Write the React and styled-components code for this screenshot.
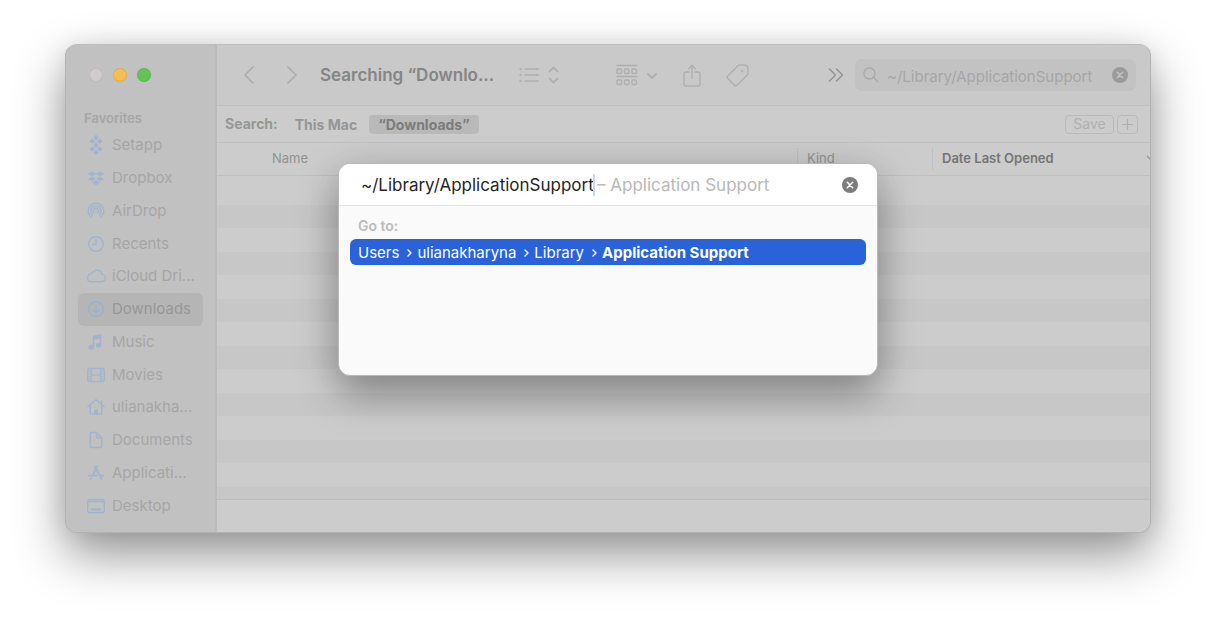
import { useState } from "react"
import styled, { createGlobalStyle } from "styled-components"

const FAVORITES = [
	{ name: "Setapp", icon: "setapp" },
	{ name: "Dropbox", icon: "dropbox" },
	{ name: "AirDrop", icon: "airdrop" },
	{ name: "Recents", icon: "clock" },
	{ name: "iCloud Dri...", icon: "cloud" },
	{ name: "Downloads", icon: "download" },
	{ name: "Music", icon: "music" },
	{ name: "Movies", icon: "film" },
	{ name: "ulianakha...", icon: "home" },
	{ name: "Documents", icon: "doc" },
	{ name: "Applicati...", icon: "apps" },
	{ name: "Desktop", icon: "desktop" },
]

const PATH = ["Users", "ulianakharyna", "Library"]

function App() {
	const [selected, setSelected] = useState("Downloads")
	const [query, setQuery] = useState("~/Library/ApplicationSupport")
	const [folder, setFolder] = useState("~/Library/ApplicationSupport")

	return (
		<Desktop>
			<GlobalStyle />
			<Window>
				<Sidebar>
					<Lights>
						<Light $color="#cfcbce" aria-label="Close" />
						<Light $color="#f5be4f" aria-label="Minimize" />
						<Light $color="#61c455" aria-label="Zoom" />
					</Lights>
					<SidebarTitle>Favorites</SidebarTitle>
					<Places>
						{FAVORITES.map(({ name, icon }) => (
							<Place
								key={name}
								$active={name === selected}
								onClick={() => setSelected(name)}
							>
								<SidebarIcon name={icon} />
								{name}
							</Place>
						))}
					</Places>
				</Sidebar>

				<Main>
					<Toolbar>
						<NavButtons>
							<ToolButton aria-label="Back">
								<Chevron d="M9 1 1 9l8 8" />
							</ToolButton>
							<ToolButton aria-label="Forward">
								<Chevron d="m1 1 8 8-8 8" />
							</ToolButton>
						</NavButtons>
						<Title>Searching “Downlo...</Title>
						<ToolButton aria-label="View as list">
							<ListIcon />
						</ToolButton>
						<ToolGroup>
							<ToolButton aria-label="Group items">
								<GroupIcon />
							</ToolButton>
							<ToolButton aria-label="Share">
								<ShareIcon />
							</ToolButton>
							<ToolButton aria-label="Edit tags">
								<TagIcon />
							</ToolButton>
						</ToolGroup>
						<MoreButton aria-label="More">
							<svg width="16" height="14" viewBox="0 0 16 14" fill="none" stroke="#949494" strokeWidth="1.5" strokeLinecap="round" strokeLinejoin="round">
								<path d="m1.5 1 6 6-6 6M8.500 1l6 6-6 6" />
							</svg>
						</MoreButton>
						<SearchField>
							<svg width="16" height="16" viewBox="0 0 16 16" fill="none" stroke="#a9a9a9" strokeWidth="1.4" strokeLinecap="round">
								<circle cx="6.500" cy="6.500" r="5.500" />
								<path d="m10.600 10.600 4.400 4.400" />
							</svg>
							<SearchInput
								aria-label="Search"
								value={query}
								onChange={(e) => setQuery(e.target.value)}
							/>
							<ClearButton aria-label="Clear search" onClick={() => setQuery("")}>
								<ClearIcon color="#9b9b9b" cross="#c5c5c5" />
							</ClearButton>
						</SearchField>
					</Toolbar>

					<ScopeBar>
						<ScopeLabel>Search:</ScopeLabel>
						<Scope>This Mac</Scope>
						<Scope $active>“Downloads”</Scope>
						<ScopeActions>
							<OutlineButton>Save</OutlineButton>
							<OutlineButton $square aria-label="Add rule">
								<svg width="11" height="11" viewBox="0 0 11 11" stroke="#b0b0b0" strokeWidth="1.2">
									<path d="M5.500 0v11M0 5.500h11" />
								</svg>
							</OutlineButton>
						</ScopeActions>
					</ScopeBar>

					<Files>
						<thead>
							<tr>
								<Column $first>Name</Column>
								<Column $width={135}>Kind</Column>
								<Column $width={218} $sorted>
									<SortedLabel>
										Date Last Opened
										<svg width="3" height="8" viewBox="0 0 3 8" fill="none" stroke="#999" strokeWidth="1.4">
											<path d="m0 2 4 4" />
										</svg>
									</SortedLabel>
								</Column>
							</tr>
						</thead>
					</Files>
					<Rows />
					<StatusBar />
				</Main>

				<Overlay>
					<Dialog role="dialog" aria-label="Go to folder">
						<DialogHead>
							<FolderInput
								aria-label="Folder path"
								value={folder}
								onChange={(e) => setFolder(e.target.value)}
							/>
							<Caret />
							<Hint>– Application Support</Hint>
							<ClearButton aria-label="Clear path" onClick={() => setFolder("")}>
								<ClearIcon color="#7c7c7c" cross="#fff" />
							</ClearButton>
						</DialogHead>
						<DialogBody>
							<GoTo>Go to:</GoTo>
							<Suggestion>
								{PATH.map((part) => (
									<Crumb key={part}>
										{part}
										<svg width="5" height="8" viewBox="0 0 5 8" fill="none" stroke="#fff" strokeWidth="1.4" strokeLinecap="round" strokeLinejoin="round">
											<path d="m1 1 3 3-3 3" />
										</svg>
									</Crumb>
								))}
								<strong>Application Support</strong>
							</Suggestion>
						</DialogBody>
					</Dialog>
				</Overlay>
			</Window>
		</Desktop>
	)
}

export default App

function Chevron({ d }) {
	return (
		<svg width="10" height="18" viewBox="0 0 10 18" fill="none" stroke="#acacac" strokeWidth="1.7" strokeLinecap="round" strokeLinejoin="round">
			<path d={d} />
		</svg>
	)
}

function ListIcon() {
	return (
		<svg width="40" height="18" viewBox="0 0 40 18" fill="none" stroke="#b0b0b0" strokeWidth="1.5" strokeLinecap="round" strokeLinejoin="round">
			<path d="M6 3h13.500M6 9h13.500M6 15h13.500" />
			<path d="M1.500 3h.1M1.500 9h.1M1.500 15h.1" strokeWidth="2.400" />
			<path d="m30.500 5.500 4-4 4 4M30.500 12.500l4 4 4-4" strokeWidth="1.800" />
		</svg>
	)
}

function GroupIcon() {
	return (
		<svg width="42" height="22" viewBox="0 0 42 22" fill="none" stroke="#b0b0b0" strokeWidth="1.5" strokeLinecap="round" strokeLinejoin="round">
			<path d="M1 1.500h20M1 12.500h20" />
			{[1, 8.5, 16].map((x) => (
				<g key={x}>
					<rect x={x} y="5" width="4.500" height="4.500" rx="1" />
					<rect x={x} y="16" width="4.500" height="4.500" rx="1" />
				</g>
			))}
			<path d="m32 10 4 4 4-4" strokeWidth="2" />
		</svg>
	)
}

function ShareIcon() {
	return (
		<svg width="18" height="23" viewBox="0 0 18 23" fill="none" stroke="#b0b0b0" strokeWidth="1.500" strokeLinecap="round" strokeLinejoin="round">
			<path d="M6 8H3a2 2 0 0 0-2 2v10a2 2 0 0 0 2 2h12a2 2 0 0 0 2-2V10a2 2 0 0 0-2-2h-3" />
			<path d="M9 14V1.500M5.800 4.500 9 1.300l3.200 3.200" />
		</svg>
	)
}

function TagIcon() {
	return (
		<svg width="23" height="23" viewBox="0 0 23 23" fill="none" stroke="#b0b0b0" strokeWidth="1.500" strokeLinejoin="round">
			<path d="M12 1.800 1.800 12a1.800 1.800 0 0 0 0 2.500l6.700 6.700a1.800 1.800 0 0 0 2.500 0L21 11.200a3 3 0 0 0 .9-2.200V4.500A3.400 3.400 0 0 0 18.500 1H14a3 3 0 0 0-2 .8z" />
			<circle cx="16" cy="7" r="1.300" fill="#b0b0b0" stroke="none" />
		</svg>
	)
}

function ClearIcon({ color, cross }) {
	return (
		<svg width="16" height="16" viewBox="0 0 16 16">
			<circle cx="8" cy="8" r="8" fill={color} />
			<path d="m5.300 5.300 5.400 5.400M10.700 5.300l-5.400 5.400" stroke={cross} strokeWidth="1.500" strokeLinecap="round" />
		</svg>
	)
}

const diamond = (x, y, w, h) => `M${x} ${y - h}l${w} ${h}-${w} ${h}-${w}-${h}z`

const GLYPHS = {
	setapp: (
		<path
			fill="#a2b4cd"
			stroke="none"
			d={[[10, 2.6], [6.3, 6.3], [13.7, 6.3], [10, 10], [6.3, 13.7], [13.7, 13.7], [10, 17.4]]
				.map(([x, y]) => diamond(x, y, 2.8, 2.8))
				.join("")}
		/>
	),
	dropbox: (
		<path
			fill="#a2b4cd"
			stroke="none"
			d={[[6, 5.8], [14, 5.8], [6, 11], [14, 11], [10, 14.7]]
				.map(([x, y]) => diamond(x, y, 4, 2.6))
				.join("")}
		/>
	),
	airdrop: (
		<>
			<path d="M5 16a7.800 7.800 0 1 1 10 0" />
			<path d="M6.500 13.900a5.200 5.200 0 1 1 7 0" />
			<path d="M8.200 12a2.700 2.700 0 1 1 3.600 0" />
			<circle cx="10" cy="10.200" r=".8" fill="#a2b4cd" stroke="none" />
		</>
	),
	clock: (
		<>
			<circle cx="10" cy="10" r="7.300" />
			<path d="M10 5.500V10.500H6.300" />
		</>
	),
	cloud: (
		<path d="M5 15.800a3.900 3.900 0 0 1-.4-7.700A3 3 0 0 1 7.300 6a4.800 4.800 0 0 1 8.600 2.400 3.700 3.700 0 0 1-.5 7.400z" />
	),
	download: (
		<g stroke="#9bb0cd">
			<circle cx="10" cy="10" r="7.300" />
			<path d="M10 6v7.500M7.300 11l2.700 2.700 2.700-2.700" />
		</g>
	),
	music: (
		<>
			<path d="M7.500 14.500V4.500l7-1.500v9.500" />
			<path d="M7.500 5v2l7-1.500V3z" fill="#a2b4cd" />
			<ellipse cx="5.300" cy="15.300" rx="2.300" ry="1.900" fill="#a2b4cd" />
			<ellipse cx="12.500" cy="13.300" rx="2" ry="1.800" fill="#a2b4cd" />
		</>
	),
	film: (
		<>
			<rect x="1.700" y="3.500" width="16.600" height="13" rx="1.500" />
			<path d="M5.200 3.500v13M14.800 3.500v13M5.200 10h9.600" />
			<path d="M3.500 5v10.500M16.500 5v10.500" strokeDasharray="1.500 1.500" strokeLinecap="butt" />
		</>
	),
	home: (
		<>
			<path d="m2 9.700 8-7 8 7M15.500 4v3M4.300 8.500V16a1 1 0 0 0 1 1h9.400a1 1 0 0 0 1-1V8.500" />
			<path d="M8 17v-4.500h4V17z" fill="#a2b4cd" stroke="none" />
		</>
	),
	doc: (
		<>
			<path d="M10.500 2.500H6A1.800 1.800 0 0 0 4.200 4.300v11.400A1.800 1.800 0 0 0 6 17.500h8a1.800 1.800 0 0 0 1.800-1.800V8z" />
			<path d="M10.500 2.500V7a1 1 0 0 0 1 1h4.300" />
		</>
	),
	apps: (
		<path strokeWidth="1.900" d="M8.700 3.200 15.500 16M11.300 3.200 7 11.800M5 15.300l-.5 1M2.800 12.800h8M14.300 12.800h2.900" />
	),
	desktop: (
		<>
			<rect x="1.700" y="3.500" width="16.600" height="13" rx="1.500" />
			<path d="M1.700 5.500h16.600" />
			<path d="M5.500 13.500h9" strokeWidth="2" />
		</>
	),
}

function SidebarIcon({ name }) {
	return (
		<svg width="20" height="20" viewBox="0 0 20 20" fill="none" stroke="#a2b4cd" strokeWidth="1.400" strokeLinecap="round" strokeLinejoin="round">
			{GLYPHS[name]}
		</svg>
	)
}

const Desktop = styled.div`
	display: flex;
	min-height: 100vh;
	padding: 44px 65px 86px;
	background: #fff;
`

const Window = styled.div`
	position: relative;
	display: flex;
	flex: 1;
	min-width: 0;
	border: 1px solid #b2b2b2;
	border-top-color: #bebebe;
	border-radius: 12px;
	background: #cccccc;
	box-shadow: 0 22px 50px rgba(0, 0, 0, 0.42), 0 0 24px rgba(0, 0, 0, 0.08);
`

const Sidebar = styled.nav`
	display: flex;
	flex-direction: column;
	flex: none;
	width: 151px;
	padding: 23px 12px 10px;
	border-right: 2px solid #bbbbbb;
	border-radius: 11px 0 0 11px;
	background: #c1c1c1;
`

const Lights = styled.div`
	display: flex;
	gap: 10px;
	padding: 0 11px;
`

const Light = styled.button`
	width: 14px;
	height: 14px;
	border: 1px solid rgba(0, 0, 0, 0.08);
	border-radius: 50%;
	background: ${(p) => p.$color};
`

const SidebarTitle = styled.h2`
	margin: 27px 0 2px;
	padding: 0 6px;
	color: #a6a6a6;
	font-size: 13px;
	font-weight: 600;
	line-height: 18px;
`

const Places = styled.div`
	display: grid;
	flex: 1;
	grid-auto-rows: 1fr;
`

const Place = styled.button`
	display: flex;
	align-items: center;
	gap: 6px;
	padding: 0 8px;
	border-radius: 6px;
	background: ${(p) => (p.$active ? "#b5b5b5" : "transparent")};
	color: ${(p) => (p.$active ? "#979797" : "#a6a6a6")};
	font-size: 15px;
	line-height: 20px;
	white-space: nowrap;

	svg {
		flex: none;
	}
`

const Main = styled.main`
	display: flex;
	flex-direction: column;
	flex: 1;
	min-width: 0;
	border-radius: 0 11px 11px 0;
	overflow: hidden;
`

const Toolbar = styled.header`
	display: flex;
	align-items: center;
	height: 61px;
	padding: 0 14px 0 27px;
	border-bottom: 1px solid #bfbfbf;
	background: #c9c9c9;
`

const NavButtons = styled.div`
	display: flex;
	gap: 33px;
`

const ToolButton = styled.button`
	display: flex;
	flex: none;
`

const Title = styled.h1`
	width: 176px;
	margin: 0 23px;
	color: #858585;
	font-size: 17px;
	font-weight: 600;
	line-height: 24px;
	white-space: nowrap;
`

const ToolGroup = styled.div`
	display: flex;
	align-items: center;
	flex: 1;
	gap: 25px;
	padding-left: 57px;
`

const MoreButton = styled(ToolButton)`
	margin-right: 11px;
`

const SearchField = styled.div`
	display: flex;
	align-items: center;
	gap: 8px;
	width: 281px;
	height: 32px;
	padding: 0 8px;
	border-radius: 7px;
	background: #c2c2c2;
`

const SearchInput = styled.input`
	flex: 1;
	min-width: 0;
	padding-top: 3px;
	color: #a6a6a6;
	font-size: 15px;
	line-height: 20px;
`

const ClearButton = styled.button`
	display: flex;
	flex: none;
	margin-left: auto;
`

const ScopeBar = styled.div`
	display: flex;
	align-items: center;
	height: 37px;
	padding: 0 12px 0 8px;
	border-bottom: 1px solid #c0c0c0;
`

const ScopeLabel = styled.span`
	margin-right: 8px;
	color: #969696;
	font-size: 14px;
	font-weight: 700;
	line-height: 18px;
`

const Scope = styled.button`
	margin-right: 3px;
	padding: 0 9px;
	border-radius: 4px;
	background: ${(p) => (p.$active ? "#b9b9b9" : "transparent")};
	color: ${(p) => (p.$active ? "#7c7c7c" : "#969696")};
	font-size: 14px;
	font-weight: 700;
	line-height: 19px;
	white-space: nowrap;
`

const ScopeActions = styled.div`
	display: flex;
	gap: 3px;
	margin-left: auto;
`

const OutlineButton = styled.button`
	display: flex;
	align-items: center;
	justify-content: center;
	width: ${(p) => (p.$square ? 21 : 49)}px;
	height: 19px;
	border: 1px solid #bababa;
	border-radius: 4px;
	color: #b0b0b0;
	font-size: 14px;
	line-height: 16px;
`

const Files = styled.table`
	width: 100%;
	border-collapse: separate;
	border-spacing: 0;
	table-layout: fixed;
`

const Column = styled.th`
	width: ${(p) => (p.$width ? `${p.$width}px` : "auto")};
	height: 33px;
	padding: 0 0 2px ${(p) => (p.$first ? 55 : 10)}px;
	border-bottom: 1px solid #c0c0c0;
	background: ${(p) =>
		p.$first
			? "none"
			: "linear-gradient(#bfbfbf, #bfbfbf) 0 50% / 1px 22px no-repeat"};
	color: ${(p) => (p.$sorted ? "#757575" : "#929292")};
	font-size: 13px;
	font-weight: ${(p) => (p.$sorted ? 600 : 400)};
	line-height: 16px;
	text-align: left;
`

const SortedLabel = styled.div`
	display: flex;
	align-items: center;
	justify-content: space-between;
`

const Rows = styled.div`
	flex: 1;
	background: repeating-linear-gradient(
		#cccccc 0 24px,
		#c7c7c7 24px 47px
	);
	background-position: 0 5px;
	background-repeat: no-repeat;
`

const StatusBar = styled.footer`
	height: 33px;
	border-top: 1px solid #bfbfbf;
	background: #cccccc;
`

const Overlay = styled.div`
	position: absolute;
	inset: 0;
	display: flex;
	align-items: flex-start;
	justify-content: center;
	padding: 118px 24px 0;
`

const Dialog = styled.section`
	width: 540px;
	border: 1px solid #b8b8b8;
	border-radius: 12px;
	background: #fafafa;
	box-shadow: 0 18px 40px rgba(0, 0, 0, 0.34), 0 0 40px rgba(0, 0, 0, 0.05);
	overflow: hidden;
`

const DialogHead = styled.div`
	display: flex;
	align-items: center;
	height: 42px;
	padding: 0 19px 0 22px;
	border-bottom: 1px solid #e3e3e3;
	background: #fff;
`

const FolderInput = styled.input`
	width: 232px;
	color: #262626;
	font-size: 17px;
	line-height: 24px;
`

const Caret = styled.span`
	width: 2px;
	height: 22px;
	margin-right: 2px;
	background: #c5d8fb;
`

const Hint = styled.span`
	color: #b9b9b9;
	font-size: 17px;
	line-height: 24px;
`

const DialogBody = styled.div`
	padding: 11px 11px 110px;
`

const GoTo = styled.h3`
	padding: 0 8px 4px;
	color: #bcbcbc;
	font-size: 14px;
	font-weight: 600;
	line-height: 18px;
`

const Suggestion = styled.button`
	display: flex;
	align-items: center;
	gap: 5px;
	width: 100%;
	height: 26px;
	padding: 1px 8px 0;
	border-radius: 6px;
	background: #2962d9;
	color: #fff;
	font-size: 15px;
	line-height: 20px;

	strong {
		font-weight: 700;
	}
`

const Crumb = styled.span`
	display: flex;
	align-items: center;
	gap: 8px;
`

const GlobalStyle = createGlobalStyle`
* {
	padding: 0;
	margin: 0;
	box-sizing: border-box;
}

body {
	font-family: Inter, "Liberation Sans", sans-serif;
	-webkit-font-smoothing: antialiased;
}

button,
input {
	border: none;
	outline: none;
	background: none;
	font-family: inherit;
}
`
